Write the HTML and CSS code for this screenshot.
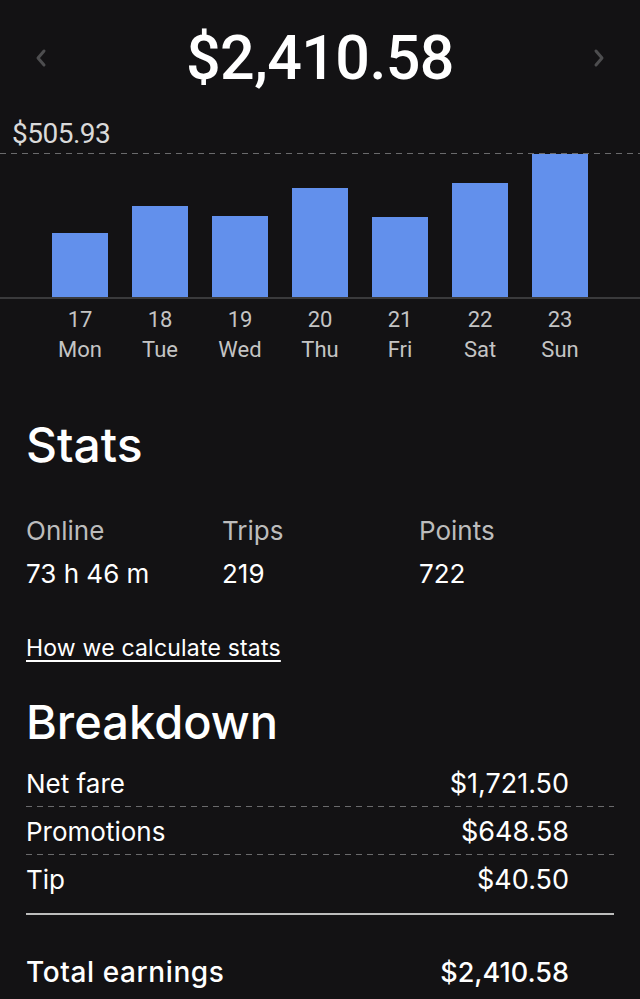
FILE: index.html
```html
<!DOCTYPE html>
<html>

<head>
    <title>Weekly earnings</title>
    <link rel="stylesheet" href="styles.css">
</head>

<body>
    <header class="top">
        <svg class="chev" width="14" height="20" viewBox="0 0 14 20">
            <polyline points="10,3 4,10 10,17" />
        </svg>
        <h1 class="total">$2,410.58</h1>
        <svg class="chev" width="14" height="20" viewBox="0 0 14 20">
            <polyline points="4,3 10,10 4,17" />
        </svg>
    </header>

    <section class="chart">
        <div class="max">$505.93</div>
        <div class="plot">
            <div class="col"><div class="bar" style="height: 64px"></div></div>
            <div class="col"><div class="bar" style="height: 91px"></div></div>
            <div class="col"><div class="bar" style="height: 81px"></div></div>
            <div class="col"><div class="bar" style="height: 109px"></div></div>
            <div class="col"><div class="bar" style="height: 80px"></div></div>
            <div class="col"><div class="bar" style="height: 114px"></div></div>
            <div class="col"><div class="bar" style="height: 143px"></div></div>
        </div>
        <div class="days">
            <div class="day"><span>17</span><span>Mon</span></div>
            <div class="day"><span>18</span><span>Tue</span></div>
            <div class="day"><span>19</span><span>Wed</span></div>
            <div class="day"><span>20</span><span>Thu</span></div>
            <div class="day"><span>21</span><span>Fri</span></div>
            <div class="day"><span>22</span><span>Sat</span></div>
            <div class="day"><span>23</span><span>Sun</span></div>
        </div>
    </section>

    <section class="stats">
        <h2>Stats</h2>
        <div class="stat-grid">
            <div class="stat">
                <div class="stat-label">Online</div>
                <div class="stat-value">73 h 46 m</div>
            </div>
            <div class="stat">
                <div class="stat-label">Trips</div>
                <div class="stat-value">219</div>
            </div>
            <div class="stat">
                <div class="stat-label">Points</div>
                <div class="stat-value">722</div>
            </div>
        </div>
        <a class="how" href="#">How we calculate stats</a>
    </section>

    <section class="breakdown">
        <h2>Breakdown</h2>
        <div class="rows">
            <div class="row dashed"><span>Net fare</span><span class="amt">$1,721.50</span></div>
            <div class="row dashed"><span>Promotions</span><span class="amt">$648.58</span></div>
            <div class="row"><span>Tip</span><span class="amt">$40.50</span></div>
            <div class="row total-row"><span class="total-label">Total earnings</span><span class="amt">$2,410.58</span></div>
        </div>
    </section>
</body>

</html>
```

FILE: styles.css
```css
/* Page */
body {
    margin: 0;
    background: #131214;
    color: #ffffff;
    font-family: Inter, "Liberation Sans", sans-serif;
    width: 640px;
    height: 999px;
    overflow: hidden;
}

/* Week total with arrows */
.top {
    height: 116px;
    display: flex;
    align-items: center;
    justify-content: space-between;
    padding: 0 34px;
}

.chev polyline {
    fill: none;
    stroke: #4d4d4f;
    stroke-width: 3;
    stroke-linecap: round;
    stroke-linejoin: round;
}

.total {
    margin: 0;
    font-family: Roboto, sans-serif;
    font-size: 61px;
    font-weight: 500;
    letter-spacing: -0.6px;
}

/* Bar chart */
.chart {
    font-family: Roboto, sans-serif;
}

.max {
    padding-left: 12px;
    font-size: 28px;
    color: #dadada;
    height: 37px;
    line-height: 36px;
    letter-spacing: -0.5px;
}

.plot {
    height: 144px;
    display: flex;
    align-items: flex-end;
    padding: 0 40px;
    background: repeating-linear-gradient(90deg, #6a6a6c 0 6px, transparent 6px 11px) top / 100% 1px no-repeat;
    border-bottom: 2px solid #3a3a3c;
}

.col {
    flex: 1;
    display: flex;
    justify-content: center;
}

.bar {
    width: 56px;
    background: #6290ec;
}

.days {
    display: flex;
    padding: 6px 40px 0;
}

.day {
    flex: 1;
    display: flex;
    flex-direction: column;
    align-items: center;
    font-size: 22px;
    line-height: 30px;
    color: #c4c4c4;
}

/* Stats */
.stats,
.breakdown {
    padding: 0 26px;
}

h2 {
    margin: 0;
    font-weight: 500;
    line-height: 56px;
}

.stats h2 {
    font-size: 48px;
    padding-top: 52px;
}

.stat-grid {
    display: grid;
    grid-template-columns: 196px 197px 1fr;
    margin-top: 40px;
}

.stat-label {
    font-size: 26px;
    color: #bcbcbc;
    line-height: 36px;
}

.stat-value {
    font-size: 26px;
    line-height: 50px;
}

.how {
    display: block;
    width: fit-content;
    margin-top: 35px;
    font-size: 23px;
    line-height: 28px;
    letter-spacing: 0.2px;
    color: #ffffff;
    text-decoration: underline;
    text-underline-offset: 4px;
}

/* Breakdown */
.breakdown h2 {
    font-size: 47px;
    padding-top: 32px;
}

.rows {
    margin-top: 9px;
}

.row {
    display: flex;
    justify-content: space-between;
    align-items: center;
    height: 48px;
    padding-right: 45px;
    font-size: 26px;
}

.row.dashed {
    background: repeating-linear-gradient(90deg, #6a6a6c 0 6px, transparent 6px 11px) bottom / 100% 1px no-repeat;
}

.amt {
    font-size: 27px;
}

.total-row {
    margin-top: 10px;
    border-top: 2px solid #bdbdbd;
    padding-top: 33px;
    font-weight: 500;
}

.total-label {
    font-size: 28px;
    letter-spacing: 0.6px;
}
```
